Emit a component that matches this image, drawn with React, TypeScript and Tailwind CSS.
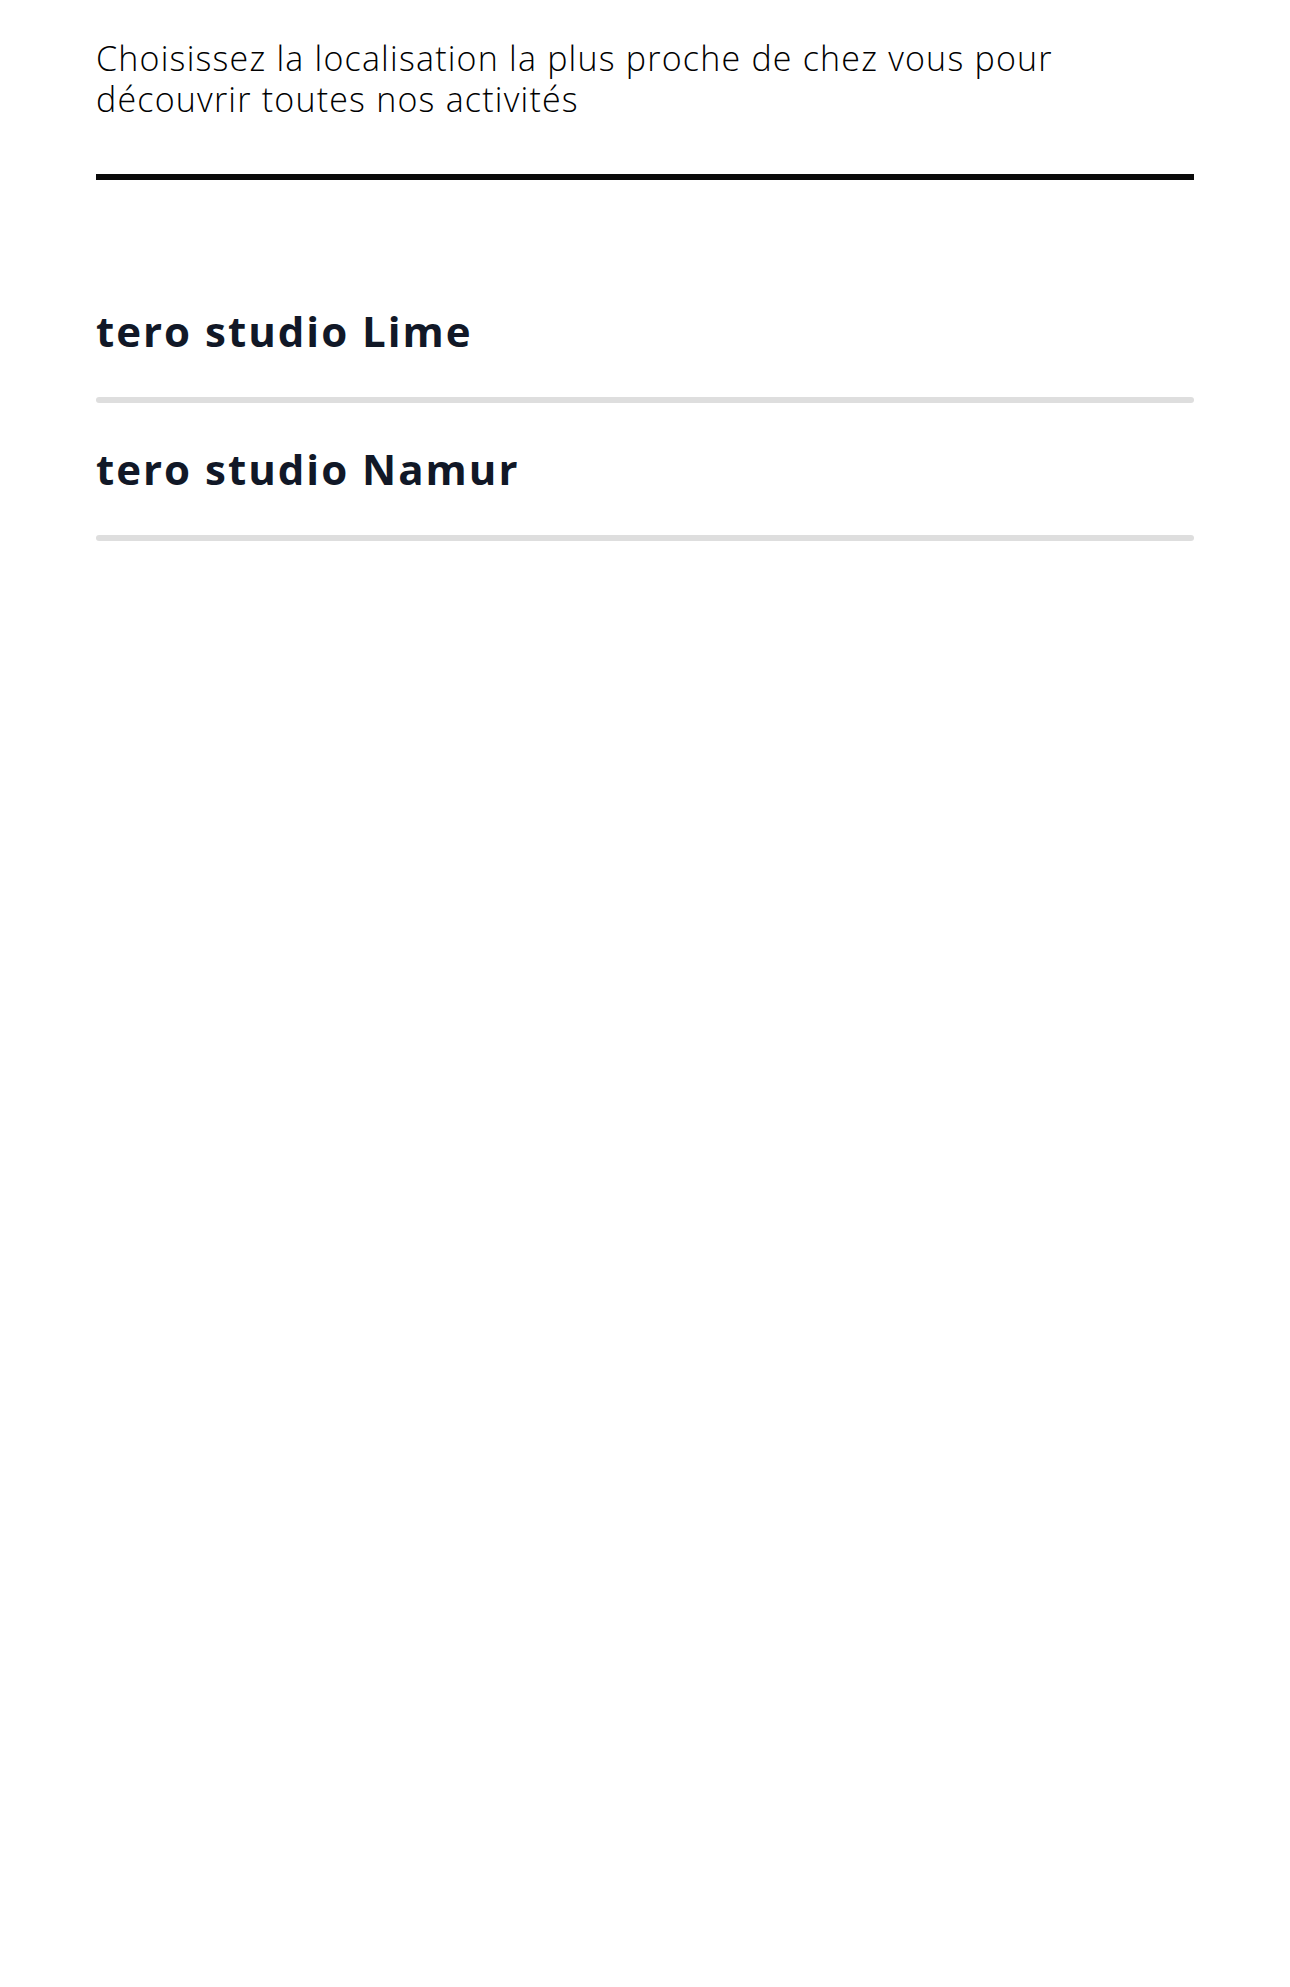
const studios = [
  { id: "lime", name: "tero studio Lime" },
  { id: "namur", name: "tero studio Namur" },
];

const StudioRow = ({ name }: { name: string }) => (
  <li>
    <a href="#" className="block py-[42px]">
      <h2 className="text-[42px] leading-[48px] font-bold tracking-[2px] text-[#111827]">{name}</h2>
    </a>
    <div className="h-[6px] rounded-full bg-[#dedede]" />
  </li>
);

const App = () => {
  return (
    <main className="min-h-screen bg-white px-[96px] pt-[38px] font-['Open_Sans',sans-serif]">
      <p className="text-[34px] leading-[41px] font-light tracking-[1.2px] text-black">
        Choisissez la localisation la plus proche de chez vous pour
        <br />
        découvrir toutes nos activités
      </p>
      <div className="mt-[54px] h-[6px] bg-[#0a0a0a]" />
      <ul className="mt-[85px]">
        {studios.map((studio) => (
          <StudioRow key={studio.id} name={studio.name} />
        ))}
      </ul>
    </main>
  );
};

export default App;
